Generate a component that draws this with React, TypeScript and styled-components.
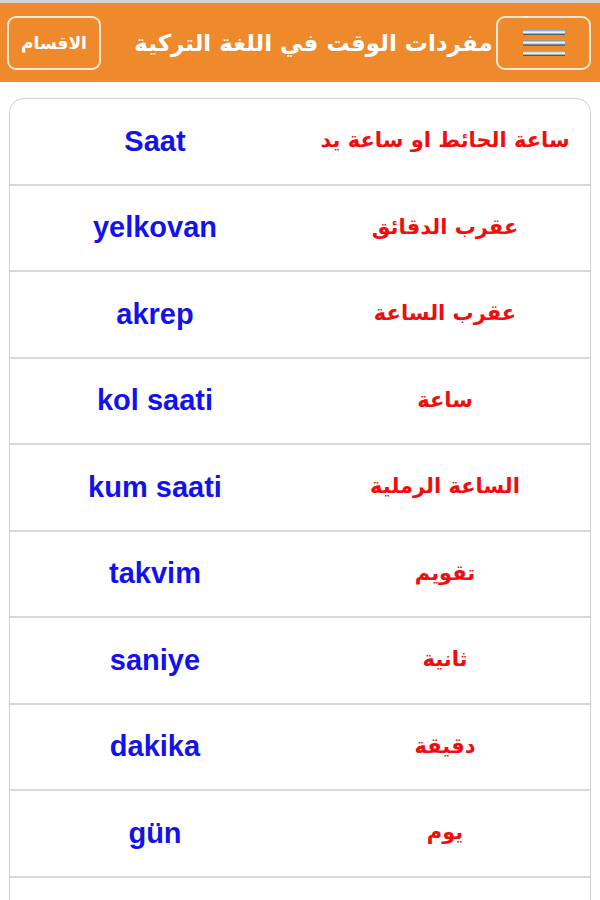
import React from "react";
import styled, { createGlobalStyle } from "styled-components";

const Global = createGlobalStyle`
  html, body { margin: 0; padding: 0; background: #fff; }
  body { font-family: "Liberation Sans", Arial, sans-serif; }
`;

const Page = styled.div`
  width: 600px;
  border-top: 3px solid #d4d4d4;
  box-sizing: border-box;
`;

const Header = styled.header`
  height: 79px;
  background: #ee8a2c;
  display: flex;
  align-items: center;
  justify-content: space-between;
  padding: 0 9px 0 7px;
  box-sizing: border-box;
`;

const HeaderButton = styled.button<{ $w: number }>`
  width: ${(p) => p.$w}px;
  height: 54px;
  border: 2px solid #fbe7d4;
  border-radius: 9px;
  background: transparent;
  color: #fff;
  font-family: "DejaVu Sans", "Liberation Sans", sans-serif;
  font-weight: bold;
  font-size: 17px;
  display: flex;
  align-items: center;
  justify-content: center;
  padding: 0;
  box-sizing: border-box;
`;

const Title = styled.h1`
  margin: 0;
  flex: 1;
  text-align: center;
  color: #fff;
  font-family: "DejaVu Sans", "Liberation Sans", sans-serif;
  font-weight: bold;
  font-size: 23px;
  padding-left: 30px;
`;

const Card = styled.div`
  margin: 16px 9px 0 9px;
  border: 1px solid #d0d0d0;
  border-bottom: none;
  border-radius: 15px 15px 0 0;
  overflow: hidden;
`;

const Row = styled.div`
  height: 86.5px;
  display: grid;
  grid-template-columns: 1fr 1fr;
  align-items: center;
  border-bottom: 2px solid #d8d8d8;
  box-sizing: border-box;
`;

const Turkish = styled.div`
  text-align: center;
  color: #1212ee;
  font-family: "Liberation Sans", Arial, sans-serif;
  font-weight: bold;
  font-size: 29px;
`;

const Arabic = styled.div`
  text-align: center;
  color: #f20c0c;
  font-family: "DejaVu Sans", "Liberation Sans", sans-serif;
  font-weight: bold;
  font-size: 21px;
  direction: rtl;
  padding-bottom: 2px;
`;

const Burger = () => (
  <svg width="42" height="28" viewBox="0 0 42 28">
    <defs>
      <linearGradient id="bg" x1="0" y1="0" x2="0" y2="1">
        <stop offset="0" stopColor="#4aa8e0" />
        <stop offset="0.45" stopColor="#ffffff" />
        <stop offset="0.7" stopColor="#9fb6c2" />
        <stop offset="1" stopColor="#1d3440" />
      </linearGradient>
    </defs>
    <rect x="0" y="1" width="42" height="5" fill="url(#bg)" />
    <rect x="0" y="11.5" width="42" height="5" fill="url(#bg)" />
    <rect x="0" y="22" width="42" height="5" fill="url(#bg)" />
  </svg>
);

const words: [string, string][] = [
  ["Saat", "ساعة الحائط او ساعة يد"],
  ["yelkovan", "عقرب الدقائق"],
  ["akrep", "عقرب الساعة"],
  ["kol saati", "ساعة"],
  ["kum saati", "الساعة الرملية"],
  ["takvim", "تقويم"],
  ["saniye", "ثانية"],
  ["dakika", "دقيقة"],
  ["gün", "يوم"],
];

export default function App() {
  return (
    <Page>
      <Global />
      <Header>
        <HeaderButton $w={94}>الاقسام</HeaderButton>
        <Title dir="rtl">مفردات الوقت في اللغة التركية</Title>
        <HeaderButton $w={95}>
          <Burger />
        </HeaderButton>
      </Header>
      <Card>
        {words.map(([tr, ar]) => (
          <Row key={tr}>
            <Turkish>{tr}</Turkish>
            <Arabic>{ar}</Arabic>
          </Row>
        ))}
        <Row />
      </Card>
    </Page>
  );
}
